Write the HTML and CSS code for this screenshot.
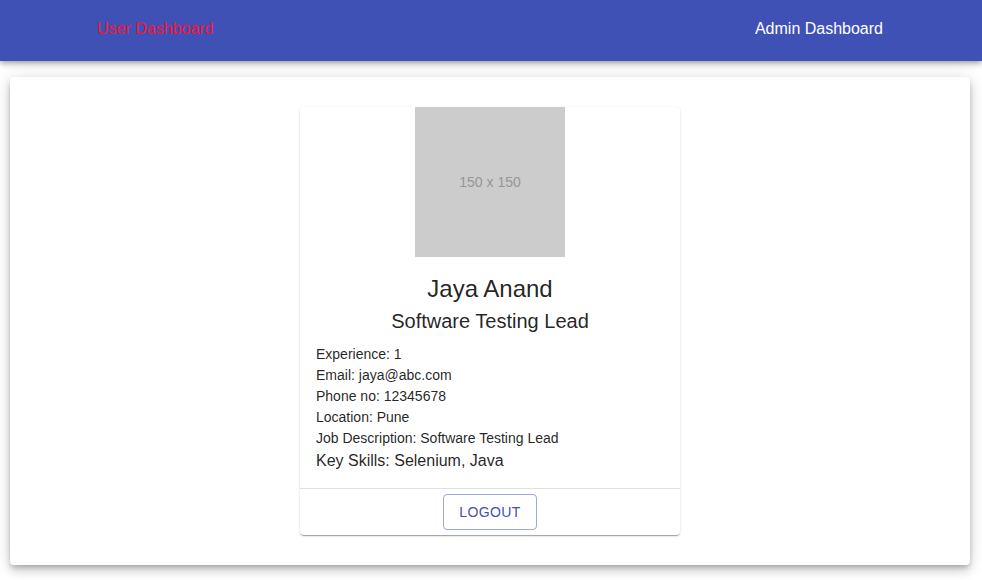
FILE: index.html
```html
<!DOCTYPE html>
<html lang="en">
<head>
<meta charset="utf-8">
<title>User Dashboard</title>
<link rel="stylesheet" href="styles.css">
</head>
<body>
<header class="appbar">
  <a class="nav-link nav-active" href="#">User Dashboard</a>
  <a class="nav-link" href="#">Admin Dashboard</a>
</header>
<main class="paper">
  <div class="card">
    <div class="avatar"><span>150 x 150</span></div>
    <div class="card-content">
      <h2 class="name">Jaya Anand</h2>
      <h3 class="role">Software Testing Lead</h3>
      <ul class="details">
        <li>Experience: 1</li>
        <li>Email: jaya@abc.com</li>
        <li>Phone no: 12345678</li>
        <li>Location: Pune</li>
        <li>Job Description: Software Testing Lead</li>
        <li class="skills">Key Skills: Selenium, Java</li>
      </ul>
    </div>
    <div class="card-actions">
      <button class="btn-outlined" type="button">Logout</button>
    </div>
  </div>
</main>
</body>
</html>
```
FILE: styles.css
```css
* { box-sizing: border-box; }
html, body { margin: 0; padding: 0; }
body {
  font-family: "Liberation Sans", Arial, sans-serif;
  color: rgba(0,0,0,0.87);
  background: #fff;
  width: 982px;
  height: 580px;
  overflow: hidden;
}
.appbar {
  height: 61px;
  background: #3f51b5;
  display: flex;
  align-items: center;
  justify-content: space-between;
  padding: 0 99px 3px 97px;
  box-shadow: 0px 2px 4px -1px rgba(0,0,0,0.2), 0px 4px 5px 0px rgba(0,0,0,0.14), 0px 1px 10px 0px rgba(0,0,0,0.12);
  position: relative;
  z-index: 1;
}
.nav-link {
  color: #fff;
  text-decoration: none;
  font-size: 16px;
  line-height: 20px;
}
.nav-active { color: #f3143c; }
.paper {
  margin: 16px 12px 0 10px;
  height: 488px;
  background: #fff;
  border-radius: 4px;
  padding: 30px 0;
  display: flex;
  justify-content: center;
  box-shadow: 0px 3px 5px -1px rgba(0,0,0,0.2), 0px 6px 10px 0px rgba(0,0,0,0.14), 0px 1px 18px 0px rgba(0,0,0,0.12);
}
.card {
  width: 380px;
  background: #fff;
  border-radius: 4px;
  box-shadow: 0px 2px 1px -1px rgba(0,0,0,0.2), 0px 1px 1px 0px rgba(0,0,0,0.14), 0px 1px 3px 0px rgba(0,0,0,0.12);
  display: flex;
  flex-direction: column;
}
.avatar {
  width: 150px;
  height: 150px;
  margin: 0 auto;
  background: #cccccc;
  color: #969696;
  font-size: 14px;
  display: flex;
  align-items: center;
  justify-content: center;
}
.card-content {
  padding: 16px 16px 16px;
}
.name {
  margin: 0;
  font-size: 24px;
  font-weight: 400;
  line-height: 32px;
  text-align: center;
}
.role {
  margin: 0;
  font-size: 20px;
  font-weight: 400;
  line-height: 32px;
  text-align: center;
}
.details {
  list-style: none;
  margin: 7px 0 0;
  padding: 0;
  font-size: 14px;
  line-height: 21px;
}
.details .skills {
  font-size: 16px;
  line-height: 23px;
}
.card-actions {
  border-top: 1px solid #e0e0e0;
  padding: 5px 0;
  display: flex;
  justify-content: center;
}
.btn-outlined {
  font-family: "Liberation Sans", Arial, sans-serif;
  font-size: 14px;
  line-height: 24px;
  letter-spacing: 0.4px;
  text-transform: uppercase;
  color: #3f51b5;
  background: transparent;
  border: 1px solid rgba(63,81,181,0.5);
  border-radius: 4px;
  padding: 5px 15px;
  width: 94px;
  height: 36px;
}
```
